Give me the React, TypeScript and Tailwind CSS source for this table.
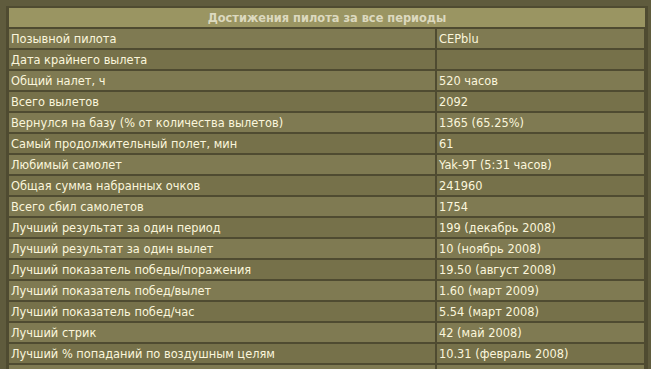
const rows: [string, string][] = [
  ["Позывной пилота", "CEPblu"],
  ["Дата крайнего вылета", ""],
  ["Общий налет, ч", "520 часов"],
  ["Всего вылетов", "2092"],
  ["Вернулся на базу (% от количества вылетов)", "1365 (65.25%)"],
  ["Самый продолжительный полет, мин", "61"],
  ["Любимый самолет", "Yak-9T (5:31 часов)"],
  ["Общая сумма набранных очков", "241960"],
  ["Всего сбил самолетов", "1754"],
  ["Лучший результат за один период", "199 (декабрь 2008)"],
  ["Лучший результат за один вылет", "10 (ноябрь 2008)"],
  ["Лучший показатель победы/поражения", "19.50 (август 2008)"],
  ["Лучший показатель побед/вылет", "1.60 (март 2009)"],
  ["Лучший показатель побед/час", "5.54 (март 2008)"],
  ["Лучший стрик", "42 (май 2008)"],
  ["Лучший % попаданий по воздушным целям", "10.31 (февраль 2008)"],
  ["", ""],
];

export default function App() {
  return (
    <div
      className="w-[651px] h-[369px] overflow-hidden bg-[#5f5b3d] pl-[6px] pt-[6px]"
      style={{ fontFamily: '"DejaVu Sans", Verdana, sans-serif' }}
    >
      <div className="w-[642px] bg-[#4f4b31] p-[3px] pt-[2px] flex flex-col gap-[2px]">
        <div className="h-[19px] bg-[#9a9562] flex items-center justify-center pt-[2px] text-[11.4px] font-bold text-[#dcd9bf]">
          Достижения пилота за все периоды
        </div>
        {rows.map(([label, value], i) => (
          <div key={i} className="grid grid-cols-[426px_207px] gap-[2px]">
            <div
              className={`h-[19px] flex items-center px-[2px] pt-[2px] text-[11.4px] text-[#fbf6dc] ${
                i % 2 === 0 ? "bg-[#7f7a52]" : "bg-[#76714a]"
              }`}
            >
              {label}
            </div>
            <div
              className={`h-[19px] flex items-center px-[2px] pt-[2px] text-[11.4px] text-[#fbf6dc] ${
                i % 2 === 0 ? "bg-[#7f7a52]" : "bg-[#76714a]"
              }`}
            >
              {value}
            </div>
          </div>
        ))}
      </div>
    </div>
  );
}
